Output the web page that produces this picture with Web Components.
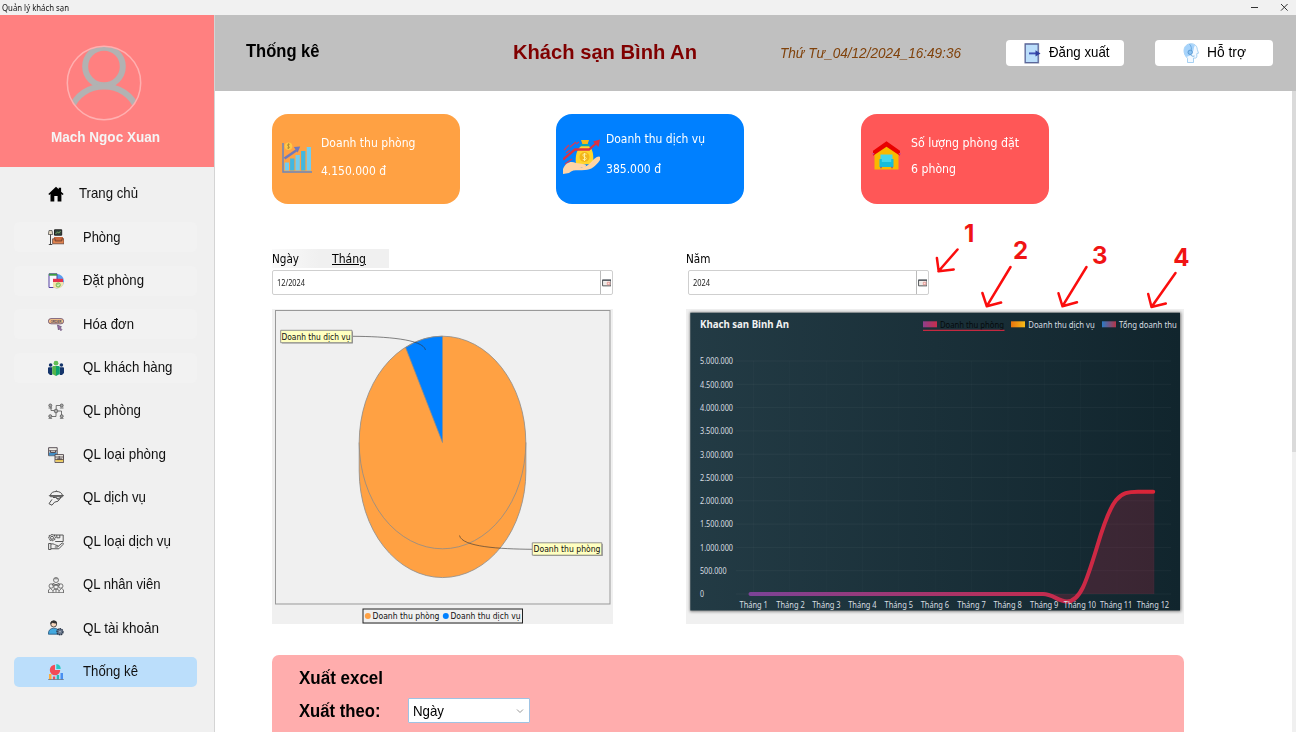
<!DOCTYPE html>
<html lang="vi">
<head>
<meta charset="utf-8">
<title>Quản lý khách sạn</title>
<style>
html,body{margin:0;padding:0;height:732px;overflow:hidden;background:#fff;font-family:"Liberation Sans",Arial,sans-serif;color:#000}
</style>
</head>
<body>
<hotel-app></hotel-app>
<script>
const SANS='"Liberation Sans",Arial,sans-serif', TAHOMA='"DejaVu Sans Condensed","Noto Sans",sans-serif', SEGOE='"Noto Sans","Open Sans",sans-serif';

class BaseElement extends HTMLElement{
  connectedCallback(){
    if(this.shadowRoot) return;
    this.attachShadow({mode:'open'}).innerHTML=this.render();
    this.ready&&this.ready();
  }
}

/* One-line label whose glyphs are condensed or widened to fill a given width. */
class FitText extends BaseElement{
  render(){return `<style>:host{display:block;white-space:nowrap;line-height:1.2}span{display:inline-block;transform-origin:0 50%}:host([underline]) span{text-decoration:underline}</style><span><slot></slot></span>`}
  ready(){
    const w=+this.getAttribute('w'), s=this.shadowRoot.querySelector('span');
    if(!w) return;
    const natural=s.getBoundingClientRect().width;
    s.style.transform=`scaleX(${w/natural})`;
    s.style.marginRight=(w-natural)+'px';
  }
}
customElements.define('fit-text',FitText);

const ICONS={
home:`<path d="M8 .7 .3 8.1l1 1L2.5 8v7.5h3.8V10h3.3v5.5h3.8V8l1.2 1.1 1-1-2.5-2.4V1.8h-2.4v1.5z" fill="#000"/>`,
room:`<path d="M1 1.5h3l.8 4H.3z" fill="#e5d9c2" stroke="#444" stroke-width=".7"/><path d="M2.5 5.5v10M.8 15.5h3.5" stroke="#333" stroke-width=".9"/><path d="M6.5.8h7.2v5.4H6.5z" fill="#33463c" stroke="#222"/><path d="m7.5 5 2-2 1.4 1 1.7-2" stroke="#9c7" stroke-width=".7" fill="none"/><path d="M6 8h9v6H6z" fill="#c9683c"/><path d="M4.6 9.8h2.5V12h6.8V9.8H16v5H4.6z" fill="#e08350" stroke="#55362c" stroke-width=".7"/>`,
booking:`<circle cx="8.8" cy="8.2" r="7.2" fill="#5a9df0"/><path d="M1 .8h8v13.7H1z" fill="#f7f7ff" stroke="#5541a0"/><path d="M1 .7h8v2H1z" fill="#3d9b44"/><path d="M5 5.8h10V9H5z" fill="#e3344d"/><path d="M5 9h10.5v1.5a7 7 0 0 1-7 5L5 14.5z" fill="#f5e4ac"/><circle cx="10.2" cy="12" r="2.2" fill="#a6da7f" stroke="#62a64c" stroke-width=".6"/><path d="m9.3 12 .7.8 1.4-1.6M3 12.6h2" stroke="#fff" stroke-width=".7" fill="none"/>`,
order:`<rect x=".4" y="2.6" width="15.2" height="5.2" rx="2.6" fill="#f8c58a" stroke="#705675" stroke-width=".9"/><text x="2.4" y="6.6" font-size="3.6" font-weight="700" textLength="11.2" lengthAdjust="spacingAndGlyphs" fill="#493c57" font-family='${SANS}'>ORDER</text><path d="m9.5 9 4 1.8-1.3.9 1.7 2-1 1-1.8-2-.7 1.2z" fill="#9e77ad" stroke="#513c65" stroke-width=".6"/>`,
customers:`<g fill="#15356b"><circle cx="2.6" cy="5" r="1.8"/><circle cx="13.4" cy="5" r="1.8"/><path d="M0 8q0-.8 1-.8h3.2V15H2l-2-2zM16 8q0-.8-1-.8h-3.2V15H14l2-2z"/></g><circle cx="8" cy="3.2" r="2.4" fill="#62bd55"/><path d="M4.2 7.3q0-1.2 1.5-1.2H8V16L4.2 14z" fill="#56b54c"/><path d="M8 6.1h2.3q1.5 0 1.5 1.2V14L8 16z" fill="#0ca36c"/>`,
rooms:`<g fill="#aaa" stroke="#555" stroke-width=".8"><path d="M3 4v3.5h3M13 2.5H8.2v4M10 8h3.5v4M8 10v3.5H4" fill="none"/><circle cx="2.3" cy="2.5" r="1.5"/><circle cx="13.7" cy="2.5" r="1.5"/><circle cx="8" cy="8" r="1.8"/><circle cx="2.3" cy="13.2" r="1.5"/><circle cx="13.7" cy="13.2" r="1.5"/><path d="M.5 5h3.6M11.9 5h3.6M.5 15.7h3.6M11.9 15.7h3.6"/></g>`,
roomtype:`<g stroke="#4b4147" stroke-width=".9"><path d="M.6.7h8.6v8H.6z" fill="#f1eee9"/><path d="M1 5.5h7.8v3H1z" fill="#418dc5" stroke="none"/><path d="M1 3.8h8M2.5 3.5v2h5v-2" fill="none"/><path d="M7 7.6h8.5v8H7z" fill="#f5f1e7"/><path d="M7.5 12.3h7.7v2.5H7.5z" fill="#e8c658" stroke="none"/><path d="M7 10h8.5M9 12h5M11.2 9v3M7 12.3h8.5" fill="none"/></g>`,
service:`<g fill="none" stroke="#3f3f3f" stroke-width=".9"><path d="M2.3 5.4C3 2.6 5.3 1.5 8.4 1.5s5.4 1.2 6.1 3.9M1.3 5.6h14.2l-1.1 1.1H2.4zM8.4 1.4V.4"/><path d="M5 7.5h2.5l2.5 1.5 3.3-1.900-3.300 4.100-3.500 1-2.500 3-3-1.500 3-4.300"/><path d="m8 7.300 2.300 2.500"/></g>`,
servicetype:`<g fill="none" stroke="#474747" stroke-width=".9"><path d="M6.2 1h9v6.5h-8M8.8 1v2.8h3V1"/><circle cx="4" cy="3.8" r="1.5"/><path d="m4 .3 1 .8 1.4-.2.2 1.4 1 .9-.8 1 .1 1.4-1.3.2-.9 1.1-1.1-.7-1.5.2-.4-1.3L.5 4l.8-1-.1-1.5 1.5-.2zM.6 9.5h2.3v6H.6zM3 10c3-1 4.3 1.7 6.5 1.5.7.2.7 1.4-.2 1.5H6.8m3-.3L14 9.2c1-.5 2 .3 1 1.3l-4.2 4.3L3 14.7"/></g>`,
staff:`<g fill="none" stroke="#5b5b5b" stroke-width=".8"><circle cx="8" cy="3" r="2.5"/><path d="M6.3 1.8h3.4M5 6.3l3 1.5 3-1.5M5 6.3 4 8h8l-1-1.7"/><circle cx="3.2" cy="9" r="2.2"/><circle cx="12.8" cy="9" r="2.2"/><circle cx="8" cy="10" r="2.2"/><path d="M.5 15.7v-2.8l2-1.5 2.3 2.3M15.5 15.7v-2.8l-2-1.5-2.3 2.3M5 15.7v-2.3L7 12h2l2 1.4v2.3M0 15.7h16M8 12.2v3"/></g>`,
account:`<circle cx="5.7" cy="4" r="3" fill="#f6d5bb" stroke="#333" stroke-width=".8"/><path d="M2.4 4V2.8Q3.2.2 6 .4t3.1 3Q6 3.8 4.6 2.7 4 3.8 2.4 4" fill="#333"/><path d="M.4 14.2Q.2 8.5 5.7 8.2c3.3 0 4.4 1.5 5 3v3z" fill="#43a9df" stroke="#26547a" stroke-width=".8"/><circle cx="12" cy="11.8" r="3" fill="#748299" stroke="#2c394b" stroke-width="1.4" stroke-dasharray="1.6 .6"/><circle cx="12" cy="11.8" r="1.1" fill="#dfe6ef" stroke="#2c394b" stroke-width=".5"/>`,
stats:`<path d="M7 .8v5.2h5.2a5.2 5.2 0 1 1-5.2-5.2" fill="#f34b55"/><path d="M8.3 0a5 5 0 0 1 4.4 5H8.3z" fill="#29c7c2"/><path d="M1 10h2.5v5.5H1z" fill="#ffae3b"/><path d="M4.900 12.500h2.300v3H4.900z" fill="#ef4e59"/><path d="M8.700 11h2.400v4.500H8.700z" fill="#28b9b4"/><path d="M12.500 9h2.500v6.500h-2.500z" fill="#4a8ff0"/><path d="M.2 15.600h15.600" stroke="#646b78" stroke-width=".8"/>`,
logout:`<path d="M.5 .3h15v20.6H.5z" fill="#dcdde0"/><path d="M1.2 1h13v18.6h-13z" fill="#bbdefb" stroke="#5b679a" stroke-width="1.3"/><path d="M5 10.400h8" stroke="#3f51b5" stroke-width="1.900"/><path d="m11.500 7.200 5 3.200-5 3.200z" fill="#303f9f"/>`,
support:`<path d="M4.5 19.5v-4.2C-.2 11-.2 3.5 5 1.3 9-.3 14 1.2 14.3 6.4l1.2 3.8-1.7.4v3.2c-.3 1.3-1.2 1.5-3.3 1.2v4.5z" fill="#f3f9ff" stroke="#92c5ef" stroke-width=".8"/><path d="M3.5 14C-.6 10 .3 2.8 5.6 1.2c2.4-.6 4.8-.2 6.3 1.2C10.3 4.8 11 7 10 8.4L8.3 12z" fill="#a6d3fb"/><path d="M6.5 1.2c2 2 2.3 4.5 1.5 7M7.5 11.5c1 1.8 2.5 2 4 1.5" fill="none" stroke="#5b9ed8" stroke-width=".8"/><circle cx="7.2" cy="9.3" r="2.2" fill="#8cc3f2" stroke="#4f8fca" stroke-width=".8"/>`,
revenue:`<path d="M1 1v29h29" fill="none" stroke="#6b86bd" stroke-width="1.5"/><g fill="#70cdf2"><path d="M2.7 20.5h4.3v8H2.7zM13.5 13h4.3v15.5h-4.3zM24.7 5H29v23.5h-4.3z"/></g><g fill="#42b7e0"><path d="M8.1 16.5h4.3v12H8.1zM19.1 9h4.3v19.5h-4.3z"/></g><path d="m2.5 16.5 12-8.3" stroke="#6f79bd" stroke-width="2.6"/><path d="m11.8 5 6.4-.5-2.5 6z" fill="#6f79bd"/><circle cx="6.5" cy="4.2" r="3.8" fill="#ffc847"/><path d="M7.8 2.4c-2-1-3.400 1-1.400 1.800s1 2.600-1.200 1.700M6.500 1.400v5.500" fill="none" stroke="#a58034" stroke-width=".7"/>`,
money:`<path d="M18 1h8l-1.5 4.5h-5z" fill="#f6b91b"/><path d="M17.5 5h9v2.3h-9z" fill="#0ca8b4"/><path d="M18 7.3h8c4 3 5 9 4 18H13c-1-9 1-15 5-18" fill="#ffd62d"/><circle cx="21.5" cy="18" r="5" fill="#f2b51b"/><path d="M23.5 15.3c-3.6-1.6-5 1.4-2 2.5s2.2 4-1.8 2.6M21.5 14v8" fill="none" stroke="#fff1a1" stroke-width="1"/><path d="m0 20.500 12-10h14l8-7" fill="none" stroke="#d93244" stroke-width="2.300"/><path d="m30 2.500 7-2-1.500 7.500z" fill="#d93244"/><path d="m1 11 5-5M7 8l6-5M2 25l7-5M3 14l4-3M13 5l3-2" stroke="#d33a5a" stroke-width="1.300"/><path d="M0 30c3-7 8-8 13-6l7 1c4 0 4 3 0 3h-4c8 1 10-3 15-8 3-3 6-3 6-2v3c-4 6-9 10-15 10-7 1-12-1-16 3l-6 1z" fill="#ffd5a6"/>`,
house:`<path d="M2.5 10 14.5 2 26.5 10v18.500h-24z" fill="#f9b900"/><path d="M14.5.3 28 9.8v5L14.5 5.8 1 14.8V9.8z" fill="#e90000"/><path d="M.2 12.7h2M26.800 12.7h2" stroke="#d54888" stroke-width="1.5"/><path d="M8.5 13.500h12v9h-12z" fill="#42d6ec"/><path d="M7.5 18h2.300V21h9.400v-3h2.300V26h-14z" fill="#16bddb"/><path d="M9 25.800v1.400M20 25.800v1.400" stroke="#8b4194" stroke-width="1.400"/>`,
calendar:`<path d="M.6 1h8.8v6H.6z" fill="#f5f1ee" stroke="#4d5052" stroke-width="1"/><path d="M.2 1h9.6" stroke="#495058" stroke-width="1.2"/><path d="M5.5 3.2h2.8v2.6H5.5z" fill="#ffe0dc" stroke="#dd8a86" stroke-width=".8"/><path d="M2 3.5h2M2 5h2" stroke="#ddd" stroke-width=".6"/>`
};
class UiIcon extends BaseElement{
  render(){
    const w=this.getAttribute('w')||16,h=this.getAttribute('h')||w,b=this.getAttribute('box')||`0 0 ${w} ${h}`;
    return `<style>:host{display:block;flex:none;width:${w}px;height:${h}px}svg{display:block}</style><svg width="${w}" height="${h}" viewBox="${b}">${ICONS[this.getAttribute('name')]}</svg>`;
  }
}
customElements.define('ui-icon',UiIcon);

class TitleBar extends BaseElement{
  render(){return `<style>:host{display:flex;height:15px;background:#f1f1f1;justify-content:space-between;align-items:center;padding:0 7px 0 2px;box-sizing:border-box}
  fit-text{font:8px ${SEGOE};color:#111}svg{display:block}</style>
  <fit-text w="67">Quản lý khách sạn</fit-text>
  <svg width="38" height="15"><path d="M0 7.5h7M30 4l6.6 6.6M36.6 4 30 10.6" stroke="#333" stroke-width="1" fill="none"/></svg>`}
}
customElements.define('title-bar',TitleBar);

class MenuItem extends BaseElement{
  render(){
    const st=this.getAttribute('state');
    const bg=st==='active'?'#bbdefb':st==='soft'?'#f2f2f2':'transparent';
    return `<style>:host{display:flex;align-items:center;height:30px;border-radius:5px;background:${bg};padding-left:34px;gap:${this.getAttribute('gap')||19}px;font:14.5px ${SANS};color:#111}</style>
    <ui-icon name="${this.getAttribute('icon')}"></ui-icon><fit-text w="${this.getAttribute('w')}">${this.getAttribute('label')}</fit-text>`}
}
customElements.define('menu-item',MenuItem);

class UserPanel extends BaseElement{
  render(){return `<style>:host{display:flex;flex-direction:column;align-items:center;height:152px;background:#ff8080;padding:29.5px 5.5px 0 0;box-sizing:border-box}
  svg{display:block}fit-text{margin:8px 0 0 2.5px;font:bold 14px ${SANS};color:#f5f5f5}</style>
  <svg width="76" height="76" viewBox="0 0 76 76"><defs><clipPath id="c"><circle cx="38" cy="38" r="36.3"/></clipPath></defs>
  <g clip-path="url(#c)" fill="none" stroke="#b2b2b2" stroke-width="6"><circle cx="38" cy="21.5" r="18.8"/><path d="M5 64C10 50 23 41.5 38 41.5s28 8.5 33 22.5"/></g>
  <circle cx="38" cy="38" r="36.7" fill="none" stroke="#ffb0b0" stroke-width="1.5"/></svg>
  <fit-text w="109">Mach Ngoc Xuan</fit-text>`}
}
customElements.define('user-panel',UserPanel);

class SideBar extends BaseElement{
  render(){
    const items=[['home','Trang chủ',59,'',15],['room','Phòng',37.5,'soft'],['booking','Đặt phòng',61,'soft'],['order','Hóa đơn',51,'soft'],['customers','QL khách hàng',89.5,'soft'],['rooms','QL phòng',58,''],['roomtype','QL loại phòng',83,''],['service','QL dịch vụ',63,''],['servicetype','QL loại dịch vụ',88,''],['staff','QL nhân viên',77.5,''],['account','QL tài khoản',76,''],['stats','Thống kê',55,'active']];
    return `<style>:host{display:block;width:214px;background:#f0f0f0;border-right:1px solid #d4d4d4}
    nav{display:flex;flex-direction:column;gap:13.45px;padding:12px 17px 0 14px}</style><user-panel></user-panel>
    <nav>${items.map(i=>`<menu-item icon="${i[0]}" label="${i[1]}" w="${i[2]}" state="${i[3]}" gap="${i[4]||19}"></menu-item>`).join('')}</nav>`}
}
customElements.define('side-bar',SideBar);

class HeaderButton extends BaseElement{
  render(){return `<style>:host{display:flex;width:118px;height:26px;background:#fff;border-radius:4px;align-items:center;box-sizing:border-box;font:14.5px ${SANS}}</style><slot></slot>`}
}
customElements.define('header-button',HeaderButton);

class PageHeader extends BaseElement{
  render(){return `<style>:host{display:flex;height:76px;background:#c0c0c0;align-items:center;box-sizing:border-box;padding-left:31px}
  .t{font:bold 17.5px ${SANS};width:267px;margin-bottom:3px}.h{font:bold 20.5px ${SANS};color:#800000;width:267px;margin-bottom:3px}.d{font:italic 14.5px ${SANS};color:#80420b;width:225.5px}
  header-button+header-button{margin-left:31.5px}</style>
  <fit-text class="t" w="73.5">Thống kê</fit-text><fit-text class="h" w="184">Khách sạn Bình An</fit-text><fit-text class="d" w="181">Thứ Tư_04/12/2024_16:49:36</fit-text>
  <header-button style="padding-left:18px"><ui-icon name="logout" w="17" h="21"></ui-icon><fit-text w="60.5" style="margin-left:8px">Đăng xuất</fit-text></header-button>
  <header-button style="padding-left:27.5px"><ui-icon name="support" w="16" h="20"></ui-icon><fit-text w="39" style="margin-left:8.5px">Hỗ trợ</fit-text></header-button>`}
}
customElements.define('page-header',PageHeader);

class StatCard extends BaseElement{
  render(){const a=n=>this.getAttribute(n);return `<style>:host{display:flex;width:188px;height:89.5px;border-radius:16px;background:${a('color')};box-sizing:border-box;color:#fff;font:12px ${TAHOMA}}
  ui-icon{margin:${a('im')}}.x{padding-top:${a('top')}px;display:flex;flex-direction:column;gap:${a('gap')}px}fit-text{line-height:16px}</style>
  <ui-icon name="${a('icon')}" w="${a('iw')}" h="${a('ih')}"></ui-icon><div class="x"><fit-text w="${a('w1')}">${a('label')}</fit-text><fit-text w="${a('w2')}">${a('value')}</fit-text></div>`}
}
customElements.define('stat-card',StatCard);

class DateField extends BaseElement{
  render(){return `<style>:host{display:flex;height:25px;box-sizing:border-box;border:1px solid #cfcfcf;border-radius:2px;background:#fff}
  .v{flex:1;display:flex;align-items:center;padding-left:4px;font:8px ${SEGOE};color:#222}.b{width:11px;border-left:1px solid #bbb;display:flex;align-items:center;justify-content:center}</style>
  <div class="v"><fit-text w="${this.getAttribute('w')}">${this.getAttribute('value')}</fit-text></div><div class="b"><ui-icon name="calendar" w="9.5" h="8" box="0 0 10 8"></ui-icon></div>`}
}
customElements.define('date-field',DateField);

const tx=(x,y,w,s,extra='')=>`<text x="${x}" y="${y}" textLength="${w}" lengthAdjust="spacingAndGlyphs" ${extra}>${s}</text>`;

class PieChart extends BaseElement{
  render(){return `<style>:host{display:block;width:341px;height:315px;background:#f0f0f0}svg{display:block}text{font:8.7px ${TAHOMA};fill:#111}</style>
  <svg width="341" height="315" viewBox="272 309 341 315">
  <rect x="275.5" y="310.5" width="334.5" height="293.5" fill="none" stroke="#999"/>
  <g stroke="#8c8c8c" stroke-width=".8"><path d="M359.2 442.5v28.5a83.3 106.5 0 0 0 166.7 0v-28.5z" fill="#ffa143"/><ellipse cx="442.5" cy="442.5" rx="83.3" ry="106.3" fill="#ffa143"/><path d="M442.5 442.5 405.6 347.5Q423 336.2 442.5 336.2z" fill="#0080ff"/></g>
  <g fill="none" stroke="#333" stroke-width=".6"><path d="M353 336.3C385 336.5 423 339 425.5 350M532 549.3C500 549 462 547 459.5 535.5"/></g>
  <path d="M282 331.5h71v12h-71zM533.5 544h69.3v12h-69.3z" fill="#999"/>
  <g fill="#ffffc0" stroke="#888" stroke-width=".9"><path d="M280.7 330.3h71.3v12.4h-71.3zM532.3 542.8h69.5v12.4h-69.5z"/></g>
  ${tx(281.5,339.8,69,'Doanh thu dịch vụ')}${tx(533.5,552.4,67,'Doanh thu phòng')}
  <rect x="363" y="609" width="159.5" height="14" fill="#f0f0f0" stroke="#222"/>
  <circle cx="367.8" cy="616" r="3" fill="#ffa143"/>${tx(372.5,619.3,67,'Doanh thu phòng')}<circle cx="445.8" cy="616" r="3" fill="#0080ff"/>${tx(450.5,619.3,70,'Doanh thu dịch vụ')}
  </svg>`}
}
customElements.define('pie-chart',PieChart);

class LineChart extends BaseElement{
  render(){
    let g='';
    ['5.000.000','4.500.000','4.000.000','3.500.000','3.000.000','2.500.000','2.000.000','1.500.000','1.000.000','500.000','0'].forEach((l,i)=>{const y=361+i*23.3;
      g+=`<path d="M736 ${y}H1171" stroke="#fff" stroke-opacity=".045"/>`+tx(700,y+3.3,i==10?4:i==9?26.5:33,l)});
    const xs=[739.5,776.3,812.2,848.2,884.6,920.7,957.3,993.4,1030,1063.8,1100,1136.8];
    xs.forEach((x,i)=>{g+=`<path d="M${753.5+i*36.35} 361V594" stroke="#fff" stroke-opacity=".018"/>`});
    const months=xs.map((x,i)=>tx(x,608.4,i>8?32.3:28.4,'Tháng '+(i+1))).join('');
    const c='C1053 594 1058 601.5 1067 601.5C1080 601.5 1086 583 1097 547C1112 496 1119 491.7 1138 491.7L1153.2 491.7';
    return `<style>:host{display:block;width:498px;height:315px;background:#f0f0f0}svg{display:block}text{font:8.2px ${SEGOE};fill:#d8dee1}</style>
    <svg width="498" height="315" viewBox="686 309 498 315"><defs>
    <linearGradient id="bg"><stop offset="0" stop-color="#233b45"/><stop offset="1" stop-color="#11252d"/></linearGradient>
    <linearGradient id="ln" gradientUnits="userSpaceOnUse" x1="750" y1="0" x2="1154" y2="0"><stop offset="0" stop-color="#7b4397"/><stop offset="1" stop-color="#dc2436"/></linearGradient>
    <linearGradient id="a"><stop stop-color="#8d3f8b"/><stop offset="1" stop-color="#c92d4c"/></linearGradient><linearGradient id="b"><stop stop-color="#e8740e"/><stop offset="1" stop-color="#f5bb18"/></linearGradient><linearGradient id="d"><stop stop-color="#2a7bc5"/><stop offset="1" stop-color="#b53548"/></linearGradient>
    <filter id="s" x="-5%" y="-5%" width="110%" height="110%"><feGaussianBlur stdDeviation="1.8"/></filter></defs>
    <rect x="690" y="312.5" width="491" height="299" fill="#000" opacity=".5" filter="url(#s)"/>
    <rect x="690.3" y="312.7" width="489.7" height="297.8" fill="url(#bg)"/>
    ${tx(700,327.7,89,'Khach san Binh An','style="font-size:10px;font-weight:700;fill:#f2f2f2"')}
    <rect x="923" y="321.3" width="14" height="6" fill="url(#a)"/><rect x="1011" y="321.3" width="14" height="6" fill="url(#b)"/><rect x="1102" y="321.3" width="14" height="6" fill="url(#d)"/>
    ${tx(940,327.8,64,'Doanh thu phòng','style="fill:#050a0c"')}${tx(1028.3,327.8,66.5,'Doanh thu dịch vụ')}${tx(1119,327.8,57.8,'Tổng doanh thu')}
    <path d="M923 330.4h81.5" stroke="#c42940" stroke-width="1.1"/>
    ${g}<path d="M1043 594${c}H1154.3V594z" fill="#dc2445" fill-opacity=".2"/>
    <path d="M750.5 594H1043${c}" fill="none" stroke="url(#ln)" stroke-width="4" stroke-linecap="round" stroke-linejoin="round"/>${months}</svg>`}
}
customElements.define('line-chart',LineChart);

class CallOuts extends BaseElement{
  render(){return `<style>:host{position:absolute;left:930px;top:215px;width:270px;height:100px;pointer-events:none}svg{display:block}text{font:bold 24px Inter,${SANS};fill:#f01414}</style>
  <svg width="270" height="100" viewBox="930 215 270 100"><g fill="none" stroke="#fb0d0d" stroke-width="2.5" stroke-linecap="round" stroke-linejoin="round">
  <path d="m957.5 249.5-19 21.8M936.9 258l1.8 13.3 15-1.8M1010.5 267l-23.7 39.2M982.4 293l4.4 13.3 14.3-3.8"/><path d="m1086.5 267-24 39.2M1058.5 293.3l4 13 14.5-4M1175.5 273l-24 34M1148.2 294l3.3 13 14.3-3.5"/></g>
  <text x="964" y="241.9">1</text><text x="1013" y="259">2</text><text x="1092" y="264.2">3</text><text x="1173.3" y="265.9">4</text></svg>`}
}
customElements.define('call-outs',CallOuts);

class ExportPanel extends BaseElement{
  render(){return `<style>:host{display:block;width:912px;height:120px;box-sizing:border-box;border-radius:7px;background:#ffadad;padding:13px 27px;font:bold 17.5px ${SANS}}
  .r{display:flex;align-items:center;margin-top:10px}.s{display:flex;align-items:center;justify-content:space-between;box-sizing:border-box;width:122px;height:25px;border:1px solid #9fc3e3;background:#fff;font:14.5px ${SANS};padding:0 5px 0 4px;border-radius:1px}fit-text{line-height:20px}</style>
  <fit-text w="84">Xuất excel</fit-text><div class="r"><fit-text w="81.5" style="width:108.5px;margin-top:1px">Xuất theo:</fit-text><div class="s"><fit-text w="31">Ngày</fit-text><svg width="8" height="6"><path d="m1 1.5 3 3 3-3" fill="none" stroke="#999"/></svg></div></div>`}
}
customElements.define('export-panel',ExportPanel);

class StatsPage extends BaseElement{
  render(){return `<style>:host{display:flex;height:641px;overflow:hidden;background:#fff}
  main{flex:1;padding:23px 0 0 57px;min-width:0}.cards{display:flex;height:89.5px}.cols{display:flex;gap:73px;margin-top:45.5px}
  .tabs{display:flex;width:117px;height:19px;background:linear-gradient(90deg,#fafafa,#f0f0f0 40%);align-items:center;font:12px ${TAHOMA}}.year{height:19px;display:flex;align-items:center;font:12px ${TAHOMA}}
  .tabs fit-text,.year fit-text{margin-top:2px}
  date-field{margin-top:2px}pie-chart,line-chart{margin-top:14px}export-panel{margin-top:31px}
  .bar{width:4px;background:#f0f0f0}.bar i{display:block;height:361px;background:#dadada}</style>
  <main><div class="cards">
  <stat-card color="#ffa143" icon="revenue" iw="31" ih="31" im="28px 8px 0 10px" top="21" gap="12" w1="94.5" w2="65" label="Doanh thu phòng" value="4.150.000 đ"></stat-card>
  <stat-card style="margin-left:96px" color="#0080ff" icon="money" iw="37" ih="35" im="25px 6px 0 7px" top="17" gap="14" w1="99" w2="55" label="Doanh thu dịch vụ" value="385.000 đ"></stat-card>
  <stat-card style="margin-left:117px" color="#ff5757" icon="house" iw="29" ih="30" im="27px 10px 0 11px" top="21" gap="10" w1="108" w2="45" label="Số lượng phòng đặt" value="6 phòng"></stat-card></div>
  <div class="cols"><section><div class="tabs"><fit-text w="27" style="width:60px">Ngày</fit-text><fit-text underline w="34">Tháng</fit-text></div><date-field value="12/2024" w="28"></date-field><pie-chart></pie-chart></section>
  <section><div class="year"><fit-text w="24.5">Năm</fit-text></div><date-field style="width:241px;margin-left:2px" value="2024" w="17"></date-field><line-chart></line-chart></section></div>
  <export-panel></export-panel></main><div class="bar"><i></i></div>`}
}
customElements.define('stats-page',StatsPage);

class HotelApp extends BaseElement{
  render(){return `<style>:host{display:block;width:1296px;height:732px;overflow:hidden;position:relative}.b{display:flex;height:717px}.m{flex:1;min-width:0}</style>
  <title-bar></title-bar><div class="b"><side-bar></side-bar><div class="m"><page-header></page-header><stats-page></stats-page></div></div><call-outs></call-outs>`}
}
customElements.define('hotel-app',HotelApp);
</script>
</body>
</html>
